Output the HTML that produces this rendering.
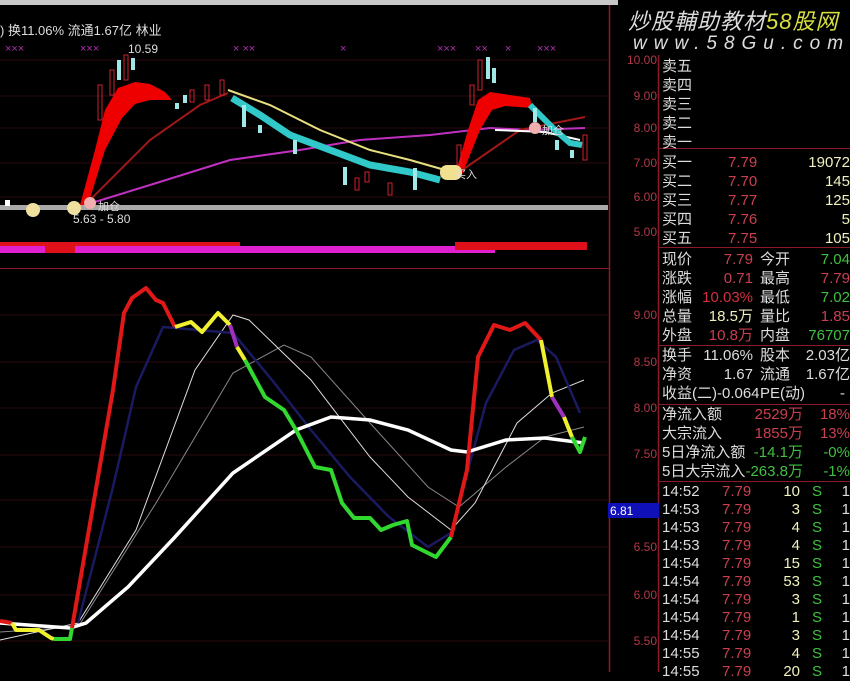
<!DOCTYPE html>
<html><head><meta charset="utf-8"><style>
body{margin:0;background:#000;width:850px;height:672px;overflow:hidden;position:relative;font-family:"Liberation Sans","Noto Sans CJK SC",sans-serif}
.t{position:absolute;white-space:nowrap}
.r{position:absolute;left:662px;width:188px;height:19px;font-size:15px;line-height:19px;color:#ddd}
.r span{position:absolute;white-space:nowrap}
.ax{position:absolute;left:612px;width:45px;text-align:right;font-size:12px;color:#b03848}
</style></head><body>
<div style="position:absolute;left:0;top:0;width:618px;height:5px;background:#c8c8c8"></div>
<svg width="850" height="672" style="position:absolute;left:0;top:0">
<g stroke="#2a0a0e" stroke-width="1">
<line x1="0" y1="60" x2="608" y2="60"/><line x1="0" y1="96" x2="608" y2="96"/><line x1="0" y1="128" x2="608" y2="128"/><line x1="0" y1="163" x2="608" y2="163"/><line x1="0" y1="197" x2="608" y2="197"/>
<line x1="0" y1="315" x2="608" y2="315"/><line x1="0" y1="362" x2="608" y2="362"/><line x1="0" y1="408" x2="608" y2="408"/><line x1="0" y1="455" x2="608" y2="455"/><line x1="0" y1="500" x2="608" y2="500"/><line x1="0" y1="547" x2="608" y2="547"/><line x1="0" y1="595" x2="608" y2="595"/><line x1="0" y1="641" x2="608" y2="641"/>
</g>
<line x1="609.5" y1="5" x2="609.5" y2="672" stroke="#8a1a28" stroke-width="1.5"/>
<line x1="0" y1="268.5" x2="609" y2="268.5" stroke="#8a1a28"/>
<line x1="658.5" y1="55" x2="658.5" y2="672" stroke="#8a1a28" stroke-width="1.5"/>
<g stroke="#8a1a28"><line x1="659" y1="148.5" x2="850" y2="148.5"/><line x1="659" y1="247.5" x2="850" y2="247.5"/><line x1="659" y1="345.5" x2="850" y2="345.5"/><line x1="659" y1="404.5" x2="850" y2="404.5"/><line x1="659" y1="481.5" x2="850" y2="481.5"/></g>
<rect x="0" y="205" width="608" height="5" fill="#a8a8a8"/>
<rect x="0" y="242" width="240" height="4" fill="#e0101a"/>
<rect x="0" y="246" width="45" height="7" fill="#e020d0"/><rect x="45" y="244" width="30" height="9" fill="#e0101a"/><rect x="75" y="246" width="165" height="7" fill="#e020d0"/>
<rect x="240" y="246" width="255" height="7" fill="#e020d0"/><rect x="455" y="242" width="132" height="8" fill="#e0101a"/>
<!-- top chart -->
<path d="M80,205 L95,150 L105,110 L118,88 L135,82 L150,84 L165,92 L172,100 L150,100 L135,104 L122,118 L105,150 L88,205Z" fill="#e00"/>
<polyline points="85,205 150,140 200,105 228,93" fill="none" stroke="#a01818" stroke-width="2"/>
<polyline points="85,205 150,185 230,160 300,150 360,140 430,135 490,128 530,130 585,128" fill="none" stroke="#c030c0" stroke-width="2"/>
<polyline points="228,90 270,105 320,130 370,150 410,160 445,170" fill="none" stroke="#e8e080" stroke-width="2"/>
<polyline points="232,98 260,115 290,135 330,150 370,165 410,172 440,180" fill="none" stroke="#30c8c8" stroke-width="7"/>
<path d="M455,175 L468,130 L478,100 L490,92 L510,95 L530,98 L532,108 L505,106 L492,110 L480,130 L462,175Z" fill="#e00"/>
<polyline points="455,175 520,130 585,117" fill="none" stroke="#a01818" stroke-width="2"/>
<polyline points="495,130 545,132 580,140" fill="none" stroke="#fff" stroke-width="2"/>
<polyline points="530,105 555,130 570,143 582,145" fill="none" stroke="#30c8c8" stroke-width="6"/>
<g fill="#a0e8e8"><rect x="117" y="60" width="4" height="20"/><rect x="131" y="58" width="4" height="12"/><rect x="242" y="105" width="4" height="22"/><rect x="258" y="125" width="4" height="8"/><rect x="293" y="140" width="4" height="14"/><rect x="343" y="167" width="4" height="18"/><rect x="413" y="168" width="4" height="22"/><rect x="486" y="57" width="4" height="22"/><rect x="492" y="68" width="4" height="15"/><rect x="533" y="108" width="4" height="14"/><rect x="555" y="140" width="4" height="10"/><rect x="570" y="150" width="4" height="8"/><rect x="183" y="95" width="4" height="8"/><rect x="175" y="103" width="4" height="6"/></g>
<g fill="none" stroke="#d02030"><rect x="98" y="85" width="4" height="35"/><rect x="110" y="70" width="4" height="25"/><rect x="124" y="55" width="4" height="25"/><rect x="190" y="90" width="4" height="12"/><rect x="205" y="85" width="4" height="15"/><rect x="220" y="80" width="4" height="15"/><rect x="355" y="178" width="4" height="12"/><rect x="365" y="172" width="4" height="10"/><rect x="388" y="183" width="4" height="12"/><rect x="457" y="145" width="4" height="20"/><rect x="470" y="85" width="4" height="20"/><rect x="478" y="60" width="4" height="30"/><rect x="583" y="135" width="4" height="25"/></g>
<g fill="#fff"><rect x="5" y="200" width="5" height="6"/><rect x="440" y="165" width="22" height="15" fill="#f0e090" rx="7"/><circle cx="33" cy="210" r="7" fill="#f0e0a0"/><circle cx="74" cy="208" r="7" fill="#f0e0a0"/><circle cx="90" cy="203" r="6" fill="#f0b0b0"/><circle cx="535" cy="128" r="6" fill="#f0b0b0"/></g>
<g fill="#b030b0" font-size="11" font-family="Liberation Sans"><text x="5" y="52">×××</text><text x="80" y="52">×××</text><text x="233" y="52">× ××</text><text x="340" y="52">×</text><text x="437" y="52">×××</text><text x="475" y="52">××</text><text x="505" y="52">×</text><text x="537" y="52">×××</text></g>
<!-- bottom chart -->
<polyline points="0,632 78,627 156,503 233,373 284,345 311,357 370,423 428,487 459,507 506,467 545,437 584,427" fill="none" stroke="#888" stroke-width="1"/>
<polyline points="0,640 78,623 136,530 195,370 233,315 249,320 311,380 370,457 408,497 451,530 475,503 517,423 552,393 584,380" fill="none" stroke="#ddd" stroke-width="1"/>
<polyline points="78,623 113,487 136,387 163,327 233,333 272,380 311,430 350,477 389,517 428,547 451,533 486,403 514,350 537,340 556,357 580,413" fill="none" stroke="#1a1a60" stroke-width="2.5"/>
<polyline points="0,623 70,628 86,623 128,587 175,537 233,473 296,430 331,417 370,420 408,430 451,450 467,452 506,440 545,438 584,443" fill="none" stroke="#fff" stroke-width="3.5"/>
<g fill="none" stroke-width="4" stroke-linejoin="round">
<polyline points="0,621 12,623" stroke="#e01818"/>
<polyline points="12,623 16,630 39,630 51,638 54,639" stroke="#f0f030"/>
<polyline points="54,639 70,639 72,628" stroke="#30d830"/>
<polyline points="72,628 113,390 124,313 132,298 146,288 156,300 163,303 175,327" stroke="#e01818"/>
<polyline points="175,327 191,322 202,332 218,313 230,325" stroke="#f0f030"/>
<polyline points="230,325 237,347" stroke="#a030c0"/>
<polyline points="237,347 245,360" stroke="#f0f030"/>
<polyline points="245,360 265,397 284,410 296,430 315,467 331,470 342,503 354,518 370,518 381,530 393,525 407,521 412,545 436,557 451,537" stroke="#30d830"/>
<polyline points="451,537 467,470 478,357 494,325 510,330 525,323 541,340" stroke="#e01818"/>
<polyline points="541,340 552,397" stroke="#f0f030"/>
<polyline points="552,397 564,417" stroke="#a030c0"/>
<polyline points="564,417 572,437" stroke="#f0f030"/>
<polyline points="572,437 580,452 585,437" stroke="#30d830"/>
</g>
<rect x="608" y="503" width="51" height="15" fill="#1010b8"/>
</svg>
<div class="t" style="left:0;top:20px;font-size:13px;color:#ddd">) 换11.06% 流通1.67亿 林业</div>
<div class="t" style="left:128px;top:42px;font-size:12px;color:#ddd">10.59</div>
<div class="t" style="left:73px;top:212px;font-size:12px;color:#ddd">5.63 - 5.80</div>
<div class="t" style="left:98px;top:198px;font-size:11px;color:#ddd">加仓</div>
<div class="t" style="left:455px;top:166px;font-size:11px;color:#ddd">买入</div>
<div class="t" style="left:542px;top:122px;font-size:11px;color:#ddd">加仓</div>
<div class="t" style="left:610px;top:504px;font-size:12px;color:#fff">6.81</div>
<div class="ax" style="top:53px">10.00</div><div class="ax" style="top:89px">9.00</div><div class="ax" style="top:121px">8.00</div><div class="ax" style="top:156px">7.00</div><div class="ax" style="top:190px">6.00</div><div class="ax" style="top:225px">5.00</div>
<div class="ax" style="top:308px">9.00</div><div class="ax" style="top:355px">8.50</div><div class="ax" style="top:401px">8.00</div><div class="ax" style="top:447px">7.50</div><div class="ax" style="top:540px">6.50</div><div class="ax" style="top:588px">6.00</div><div class="ax" style="top:634px">5.50</div>
<div class="t" style="left:628px;top:4px;font-size:22px;color:#ddd;font-style:italic;letter-spacing:1px">炒股輔助教材<span style="color:#d8e040">58股网</span></div>
<div class="t" style="left:633px;top:33px;font-size:19px;color:#ddd;font-style:italic;letter-spacing:7px">www.58Gu.com</div>
<div class="r" style="top:57px"><span>卖五</span></div>
<div class="r" style="top:76px"><span>卖四</span></div>
<div class="r" style="top:95px"><span>卖三</span></div>
<div class="r" style="top:114px"><span>卖二</span></div>
<div class="r" style="top:133px"><span>卖一</span></div>
<div class="r" style="top:153px"><span>买一</span><span style="left:66px;color:#c84050">7.79</span><span style="right:0;color:#f0f0c0">19072</span></div>
<div class="r" style="top:172px"><span>买二</span><span style="left:66px;color:#c84050">7.70</span><span style="right:0;color:#f0f0c0">145</span></div>
<div class="r" style="top:191px"><span>买三</span><span style="left:66px;color:#c84050">7.77</span><span style="right:0;color:#f0f0c0">125</span></div>
<div class="r" style="top:210px"><span>买四</span><span style="left:66px;color:#c84050">7.76</span><span style="right:0;color:#f0f0c0">5</span></div>
<div class="r" style="top:229px"><span>买五</span><span style="left:66px;color:#c84050">7.75</span><span style="right:0;color:#f0f0c0">105</span></div>
<div class="r" style="top:250px"><span>现价</span><span style="right:97px;color:#c84050">7.79</span><span style="left:98px">今开</span><span style="right:0;color:#40c040">7.04</span></div>
<div class="r" style="top:269px"><span>涨跌</span><span style="right:97px;color:#c84050">0.71</span><span style="left:98px">最高</span><span style="right:0;color:#c84050">7.79</span></div>
<div class="r" style="top:288px"><span>涨幅</span><span style="right:97px;color:#d03040">10.03%</span><span style="left:98px">最低</span><span style="right:0;color:#40c040">7.02</span></div>
<div class="r" style="top:307px"><span>总量</span><span style="right:97px;color:#f0f0c0">18.5万</span><span style="left:98px">量比</span><span style="right:0;color:#c84050">1.85</span></div>
<div class="r" style="top:326px"><span>外盘</span><span style="right:97px;color:#c84050">10.8万</span><span style="left:98px">内盘</span><span style="right:0;color:#40c040">76707</span></div>
<div class="r" style="top:346px"><span>换手</span><span style="right:97px">11.06%</span><span style="left:98px">股本</span><span style="right:0">2.03亿</span></div>
<div class="r" style="top:365px"><span>净资</span><span style="right:97px">1.67</span><span style="left:98px">流通</span><span style="right:0">1.67亿</span></div>
<div class="r" style="top:384px"><span>收益(二)-0.064</span><span style="left:98px">PE(动)</span><span style="right:5px">-</span></div>
<div class="r" style="top:405px"><span>净流入额</span><span style="right:47px;color:#c84050">2529万</span><span style="right:0;color:#c84050">18%</span></div>
<div class="r" style="top:424px"><span>大宗流入</span><span style="right:47px;color:#c84050">1855万</span><span style="right:0;color:#c84050">13%</span></div>
<div class="r" style="top:443px"><span>5日净流入额</span><span style="right:47px;color:#40c040">-14.1万</span><span style="right:0;color:#40c040">-0%</span></div>
<div class="r" style="top:462px"><span>5日大宗流入</span><span style="right:47px;color:#40c040">-263.8万</span><span style="right:0;color:#40c040">-1%</span></div>
<div class="r" style="top:482px"><span>14:52</span><span style="left:60px;color:#c84050">7.79</span><span style="right:50px;color:#f0f0c0">10</span><span style="left:150px;color:#40c040">S</span><span style="right:0">1</span></div>
<div class="r" style="top:500px"><span>14:53</span><span style="left:60px;color:#c84050">7.79</span><span style="right:50px;color:#f0f0c0">3</span><span style="left:150px;color:#40c040">S</span><span style="right:0">1</span></div>
<div class="r" style="top:518px"><span>14:53</span><span style="left:60px;color:#c84050">7.79</span><span style="right:50px;color:#f0f0c0">4</span><span style="left:150px;color:#40c040">S</span><span style="right:0">1</span></div>
<div class="r" style="top:536px"><span>14:53</span><span style="left:60px;color:#c84050">7.79</span><span style="right:50px;color:#f0f0c0">4</span><span style="left:150px;color:#40c040">S</span><span style="right:0">1</span></div>
<div class="r" style="top:554px"><span>14:54</span><span style="left:60px;color:#c84050">7.79</span><span style="right:50px;color:#f0f0c0">15</span><span style="left:150px;color:#40c040">S</span><span style="right:0">1</span></div>
<div class="r" style="top:572px"><span>14:54</span><span style="left:60px;color:#c84050">7.79</span><span style="right:50px;color:#f0f0c0">53</span><span style="left:150px;color:#40c040">S</span><span style="right:0">1</span></div>
<div class="r" style="top:590px"><span>14:54</span><span style="left:60px;color:#c84050">7.79</span><span style="right:50px;color:#f0f0c0">3</span><span style="left:150px;color:#40c040">S</span><span style="right:0">1</span></div>
<div class="r" style="top:608px"><span>14:54</span><span style="left:60px;color:#c84050">7.79</span><span style="right:50px;color:#f0f0c0">1</span><span style="left:150px;color:#40c040">S</span><span style="right:0">1</span></div>
<div class="r" style="top:626px"><span>14:54</span><span style="left:60px;color:#c84050">7.79</span><span style="right:50px;color:#f0f0c0">3</span><span style="left:150px;color:#40c040">S</span><span style="right:0">1</span></div>
<div class="r" style="top:644px"><span>14:55</span><span style="left:60px;color:#c84050">7.79</span><span style="right:50px;color:#f0f0c0">4</span><span style="left:150px;color:#40c040">S</span><span style="right:0">1</span></div>
<div class="r" style="top:662px"><span>14:55</span><span style="left:60px;color:#c84050">7.79</span><span style="right:50px;color:#f0f0c0">20</span><span style="left:150px;color:#40c040">S</span><span style="right:0">1</span></div>
</body></html>
